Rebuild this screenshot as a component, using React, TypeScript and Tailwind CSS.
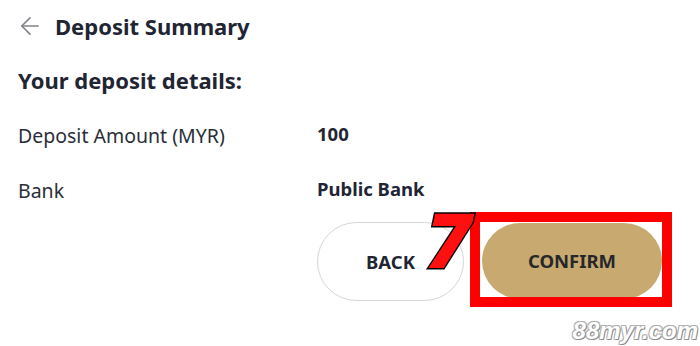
import { ArrowLeft } from 'lucide-react';

const rows = [
  { label: 'Deposit Amount (MYR)', value: '100' },
  { label: 'Bank', value: 'Public Bank' },
];

export default function App() {
  return (
    <div className="relative w-[700px] h-[346px] overflow-hidden bg-white text-[#1f2533] font-['Noto_Sans',sans-serif]">
      <div className="pl-[16px] pt-[8px]">
        <div className="flex items-center gap-[11px] h-[36px]">
          <ArrowLeft className="w-[28px] h-[28px] text-[#80838a]" strokeWidth={1.4} />
          <h1 className="text-[22px] font-bold leading-none">Deposit Summary</h1>
        </div>

        <h2 className="ml-[2px] mt-[25px] text-[22px] font-bold leading-none">Your deposit details:</h2>

        <div className="ml-[2px] mt-[30px] flex flex-col gap-[27px]">
          {rows.map((row) => (
            <div key={row.label} className="flex items-start text-[19.5px] leading-[26px]">
              <span className="w-[299px] pt-[2px] text-[#2a2e38]">{row.label}</span>
              <span className="text-[18.5px] font-bold">{row.value}</span>
            </div>
          ))}
        </div>

        <div className="mt-[18px] ml-[301px] flex gap-[18px]">
          <button className="w-[147px] h-[79px] rounded-full border border-[#d6d6d6] bg-white text-[18.5px] font-bold">
            BACK
          </button>
          <div className="relative">
            <button className="w-[180px] h-[76px] mt-[1px] rounded-full bg-[#c8a96f] text-[18.5px] font-bold text-[#25272b]">
              CONFIRM
            </button>
            {/* highlight overlay */}
            <div className="absolute left-[-12px] top-[-10px] w-[202px] h-[95px] border-[10px] border-[#ff0000]" />
            <span className="absolute left-[-55px] top-[-21px] text-[76px] font-black leading-none text-[#ff1010] font-['Noto_Sans',sans-serif] -skew-x-12 [-webkit-text-stroke:3px_#000] [paint-order:stroke_fill]">
              7
            </span>
          </div>
        </div>
      </div>

      <span className="absolute right-[2px] bottom-[3px] text-[24px] font-bold italic leading-none text-white font-['Liberation_Sans',sans-serif] [text-shadow:1px_1px_0_#8a8a8a,-1px_-1px_0_#b0b0b0,1px_-1px_0_#b0b0b0,-1px_1px_0_#b0b0b0]">
        88myr.com
      </span>
    </div>
  );
}
